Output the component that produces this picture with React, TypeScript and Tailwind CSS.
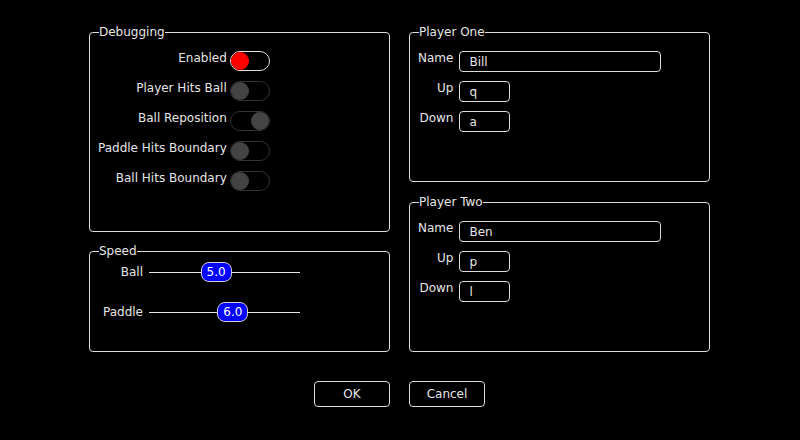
import { useState } from "react";

type Toggle = { label: string; on: boolean; active?: boolean };

const debugFlags: Toggle[] = [
  { label: "Enabled", on: false, active: true },
  { label: "Player Hits Ball", on: false },
  { label: "Ball Reposition", on: true },
  { label: "Paddle Hits Boundary", on: false },
  { label: "Ball Hits Boundary", on: false },
];

function Switch({ on, active }: { on: boolean; active?: boolean }) {
  return (
    <div
      className={
        "flex h-[20px] w-[40px] rounded-[10px] border " +
        (active ? "border-[#e0e0e0]" : "border-[#333333]") +
        (on ? " justify-end" : " justify-start")
      }
    >
      <div
        className={
          "h-[18px] w-[18px] rounded-full " +
          (active ? "bg-[#ff0000]" : "bg-[#444444]")
        }
      />
    </div>
  );
}

// slider runs 1..10, handle centred on the value
function Slider({ value }: { value: number }) {
  const width = 151;
  const left = ((value - 1) / 9) * width - 15.5;
  return (
    <div className="relative h-[20px] w-[151px]">
      <div className="absolute left-0 right-0 top-[10px] h-px bg-[#e6e6e6]" />
      <div
        className="absolute top-0 flex h-[20px] w-[31px] items-center justify-center rounded-[8px] border border-[#d0d0d0] bg-[#0000ff] leading-[15px] text-white"
        style={{ left }}
      >
        {value.toFixed(1)}
      </div>
    </div>
  );
}

function Group({
  title,
  className,
  children,
}: {
  title: string;
  className: string;
  children: React.ReactNode;
}) {
  return (
    <fieldset
      className={
        "rounded-[4px] border border-[#dcdcdc] px-2 " + className
      }
    >
      <legend className="ml-px p-0 leading-[15px]">{title}</legend>
      {children}
    </fieldset>
  );
}

function Player({
  title,
  name,
  up,
  down,
  className,
}: {
  title: string;
  name: string;
  up: string;
  down: string;
  className: string;
}) {
  return (
    <Group title={title} className={className}>
      <div className="grid grid-cols-[auto_auto] justify-start gap-x-[6px] gap-y-[9px]">
        {[
          ["Name", name, "w-[202px]"],
          ["Up", up, "w-[51px]"],
          ["Down", down, "w-[51px]"],
        ].map(([label, val, w]) => (
          <div key={label} className="contents">
            <div className="text-right leading-[15px]">{label}</div>
            <input
              defaultValue={val}
              className={
                "h-[21px] rounded-[4px] border border-[#dcdcdc] bg-black pl-[9px] leading-[15px] text-[#e6e6e6] outline-none " +
                w
              }
            />
          </div>
        ))}
      </div>
    </Group>
  );
}

export default function App() {
  const [flags] = useState(debugFlags);

  return (
    <div
      className="h-[440px] w-[800px] bg-black pl-[89px] pt-[25px] text-[12px] text-[#e6e6e6]"
      style={{ fontFamily: '"DejaVu Sans", Verdana, sans-serif' }}
    >
      <div className="flex gap-x-[19px]">
        <div className="flex w-[301px] flex-col gap-y-[12px]">
          <Group title="Debugging" className="h-[207px] pt-[11px]">
            <div className="grid grid-cols-[auto_auto] justify-start gap-x-[3px] gap-y-[10px]">
              {flags.map((f) => (
                <div key={f.label} className="contents">
                  <div className="text-right leading-[15px]">{f.label}</div>
                  <Switch on={f.on} active={f.active} />
                </div>
              ))}
            </div>
          </Group>
          <Group title="Speed" className="h-[108px] pt-[3px]">
            <div className="flex flex-col gap-y-[20px]">
              <div className="flex items-center gap-x-[6px]">
                <div className="w-[45px] text-right leading-[15px]">Ball</div>
                <Slider value={5} />
              </div>
              <div className="flex items-center gap-x-[6px]">
                <div className="w-[45px] text-right leading-[15px]">Paddle</div>
                <Slider value={6} />
              </div>
            </div>
          </Group>
        </div>
        <div className="flex w-[301px] flex-col gap-y-[13px]">
          <Player title="Player One" name="Bill" up="q" down="a" className="h-[157px] pt-[11px]" />
          <Player title="Player Two" name="Ben" up="p" down="l" className="h-[157px] pt-[11px]" />
        </div>
      </div>
      <div className="mt-[29px] flex w-[621px] justify-center gap-x-[19px]">
        <button className="h-[26px] w-[76px] rounded-[4px] border border-[#dcdcdc] bg-black leading-[15px] text-[#e6e6e6]">
          OK
        </button>
        <button className="h-[26px] w-[76px] rounded-[4px] border border-[#dcdcdc] bg-black leading-[15px] text-[#e6e6e6]">
          Cancel
        </button>
      </div>
    </div>
  );
}
